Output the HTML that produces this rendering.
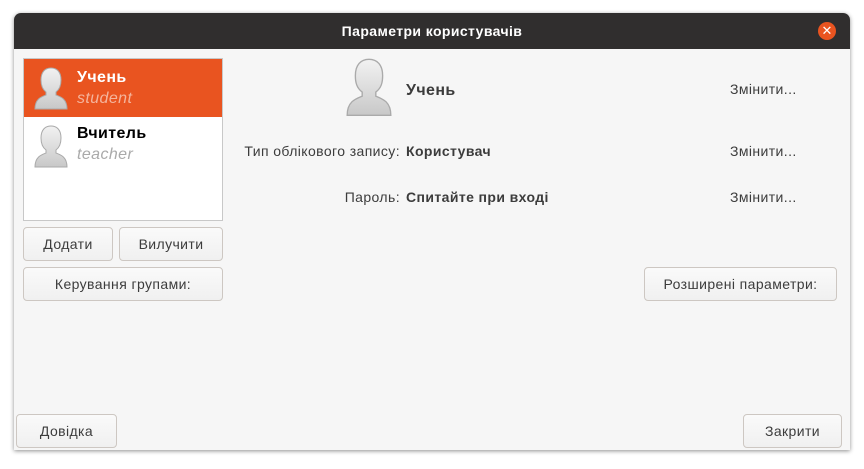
<!DOCTYPE html>
<html><head><meta charset="utf-8"><style>
*{box-sizing:border-box;margin:0;padding:0}
body{width:864px;height:469px;background:#fff;font-family:"Liberation Sans","DejaVu Sans",sans-serif;font-size:14px;color:#3c3c3c;position:relative;overflow:hidden;letter-spacing:0.4px}
.win{position:absolute;left:14px;top:13px;width:836px;height:437px;background:#f6f6f6;border-radius:7px 7px 0 0;box-shadow:0 1px 4px rgba(0,0,0,.45);overflow:hidden}
.tb{height:36px;background:#302e2e;color:#fff;font-weight:bold;text-align:center;line-height:36px;font-size:14px}
.close{position:absolute;right:14px;top:9px;width:18px;height:18px;border-radius:50%;background:#e95420;color:#fff;font-size:13px;line-height:18px;text-align:center;letter-spacing:0}
.abs{position:absolute}
.btn{position:absolute;border:1px solid #cdc7c2;border-radius:4px;background:linear-gradient(#fafafa,#f0f0f0);text-align:center;font-size:14px;color:#3c3c3c}
.list{position:absolute;left:9px;top:45px;width:200px;height:163px;background:#fff;border:1px solid #c8c8c8}
.row{position:absolute;left:0;width:198px;height:58px}
.n{position:absolute;left:53px;font-weight:bold;font-size:16px}
.u{position:absolute;left:53px;font-style:italic;font-size:16px;color:#aaa}
.lbl{position:absolute;text-align:right;right:450px;font-size:14px}
.val{position:absolute;left:392px;font-weight:bold}
.ch{position:absolute;left:716px}
</style></head><body>
<div class="win">
<div class="tb">Параметри користувачів</div>
<div class="close">✕</div>
<div class="list">
 <div class="row" style="top:0;background:#e95420">
  <svg class="abs" style="left:9px;top:8px" width="36" height="44" viewBox="0 0 36 44"><defs><linearGradient id="g" x1="0" y1="0" x2="0" y2="1"><stop offset="0" stop-color="#f2f2f2"/><stop offset="1" stop-color="#c8c8c8"/></linearGradient></defs><path d="M2 42 C2 32 8 30 13 28 L13 25 C9 22 8 18 8 13 C8 5 12 1 18 1 C24 1 28 5 28 13 C28 18 27 22 23 25 L23 28 C28 30 34 32 34 42 Z" fill="url(#g)" stroke="#aaa" stroke-width="1"/></svg>
  <div class="n" style="top:10px;color:#fff">Учень</div>
  <div class="u" style="top:31px;color:#f4b49c">student</div>
 </div>
 <div class="row" style="top:58px">
  <svg class="abs" style="left:9px;top:8px" width="36" height="44" viewBox="0 0 36 44"><path d="M2 42 C2 32 8 30 13 28 L13 25 C9 22 8 18 8 13 C8 5 12 1 18 1 C24 1 28 5 28 13 C28 18 27 22 23 25 L23 28 C28 30 34 32 34 42 Z" fill="url(#g)" stroke="#aaa" stroke-width="1"/></svg>
  <div class="n" style="top:8px;color:#000">Вчитель</div>
  <div class="u" style="top:29px">teacher</div>
 </div>
</div>
<div class="btn" style="left:9px;top:214px;width:90px;height:34px;line-height:32px">Додати</div>
<div class="btn" style="left:105px;top:214px;width:104px;height:34px;line-height:32px">Вилучити</div>
<div class="btn" style="left:9px;top:254px;width:200px;height:34px;line-height:32px">Керування групами:</div>
<svg class="abs" style="left:330px;top:45px" width="50" height="60" viewBox="0 0 36 44"><path d="M2 42 C2 32 8 30 13 28 L13 25 C9 22 8 18 8 13 C8 5 12 1 18 1 C24 1 28 5 28 13 C28 18 27 22 23 25 L23 28 C28 30 34 32 34 42 Z" fill="url(#g)" stroke="#aaa" stroke-width="1"/></svg>
<div class="val" style="top:69px;font-size:16px">Учень</div>
<div class="ch" style="top:68px">Змінити...</div>
<div class="lbl" style="top:130px">Тип облікового запису:</div>
<div class="val" style="top:130px">Користувач</div>
<div class="ch" style="top:130px">Змінити...</div>
<div class="lbl" style="top:176px">Пароль:</div>
<div class="val" style="top:176px">Спитайте при вході</div>
<div class="ch" style="top:176px">Змінити...</div>
<div class="btn" style="left:630px;top:254px;width:193px;height:34px;line-height:32px">Розширені параметри:</div>
<div class="btn" style="left:2px;top:401px;width:101px;height:34px;line-height:32px">Довідка</div>
<div class="btn" style="left:729px;top:401px;width:99px;height:34px;line-height:32px">Закрити</div>
</div>
</body></html>
